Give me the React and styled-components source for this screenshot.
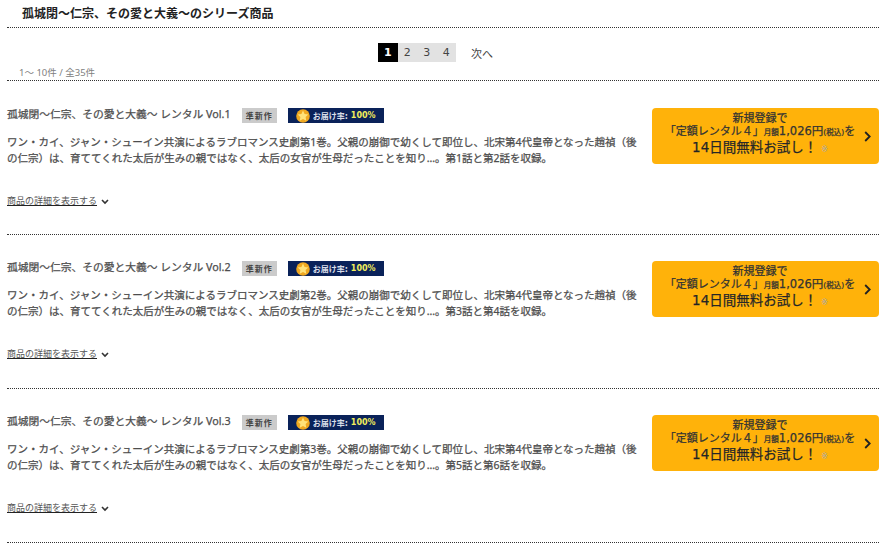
import styled, { createGlobalStyle } from "styled-components";

const Global = createGlobalStyle`
  html, body { margin: 0; padding: 0; background: #fff; }
  body { font-family: "Noto Sans", "Noto Sans CJK JP", sans-serif; color: #333; }
`;

const Page = styled.div`
  width: 886px;
  height: 557px;
  overflow: hidden;
  padding: 0 7px;
  box-sizing: border-box;
`;

const Heading = styled.h2`
  margin: 0;
  height: 27px;
  padding-left: 15px;
  border-bottom: 1px dotted #333;
  font-size: 12px;
  line-height: 27px;
  font-weight: bold;
  color: #222;
`;

const Pager = styled.div`
  display: flex;
  justify-content: center;
  align-items: center;
  height: 19px;
  margin-top: 15px;
  font-size: 11px;
  font-family: "DejaVu Sans", "Noto Sans CJK JP", sans-serif;
`;

const PageNum = styled.span`
  width: 19.5px;
  height: 19px;
  line-height: 19px;
  text-align: center;
  background: ${(p) => (p.$active ? "#000" : "#e2e2e2")};
  color: ${(p) => (p.$active ? "#fff" : "#444")};
  font-weight: ${(p) => (p.$active ? "bold" : "normal")};
`;

const Next = styled.span`
  margin-left: 15px;
  width: 37px;
  color: #444;
`;

const Count = styled.div`
  height: 18px;
  padding-left: 12px;
  border-bottom: 1px dotted #333;
  font-size: 9.5px;
  line-height: 22px;
  color: #808080;
`;

const Item = styled.section`
  display: flex;
  justify-content: space-between;
  height: 154px;
  padding-top: 27px;
  box-sizing: border-box;
  border-bottom: 1px dotted #333;
  & + & { padding-top: 26px; }
`;

const Body = styled.div`
  width: 640px;
`;

const TitleRow = styled.div`
  display: flex;
  align-items: center;
  height: 15px;
`;

const Title = styled.span`
  margin-top: -4px;
  font-size: 10.75px;
  -webkit-text-stroke: 0.25px #4d4d4d;
  color: #4d4d4d;
`;

const NewTag = styled.span`
  margin-left: 11px;
  width: 35px;
  height: 15px;
  background: #cbcbcb;
  color: #444;
  font-size: 8px;
  font-weight: bold;
  letter-spacing: 1px;
  line-height: 15px;
  text-align: center;
`;

const RateTag = styled.span`
  display: flex;
  align-items: center;
  margin-left: 11px;
  width: 96px;
  height: 15px;
  padding-left: 8px;
  box-sizing: border-box;
  background: #0a2259;
  color: #d8dde8;
  font-family: "DejaVu Sans", "Noto Sans CJK JP", sans-serif;
  font-size: 8px;
  font-weight: bold;
  white-space: nowrap;
  svg { margin-right: 3px; flex: none; }
  b { color: #f2ee5c; margin-left: 3px; }
`;

const Desc = styled.p`
  margin: 11px 0 0;
  font-size: 10.5px;
  line-height: 16px;
  -webkit-text-stroke: 0.25px #4d4d4d;
  color: #4d4d4d;
`;

const More = styled.div`
  display: flex;
  align-items: center;
  margin-top: 28px;
  font-size: 9px;
  color: #555;
  a { color: #555; text-decoration: underline; text-decoration-color: #222; }
  svg { margin-left: 4px; margin-top: 2px; }
`;

const Cta = styled.a`
  position: relative;
  width: 227px;
  height: 56px;
  border-radius: 4px;
  background: #ffb20a;
  color: #333;
  font-family: "DejaVu Sans", "Noto Sans CJK JP", sans-serif;
  font-size: 11px;
  -webkit-text-stroke: 0.25px #333;
  line-height: 13px;
  text-align: center;
  padding: 4px 11px 0 0;
  box-sizing: border-box;
  white-space: nowrap;
  svg { position: absolute; right: 7px; top: 23px; }
`;

const CtaPrice = styled.span`
  font-size: 11.5px;
`;

const CtaBig = styled.span`
  font-size: 13.5px;
  line-height: 16px;
  color: #222;
`;

const CtaSmall = styled.span`
  font-size: 7.5px;
`;

const Note = styled.span`
  font-size: 8px;
  color: #aaa;
  -webkit-text-stroke: 0;
  font-weight: normal;
  margin-left: 4px;
`;

const Star = () => (
  <svg width="14" height="14" viewBox="0 0 14 14">
    <circle cx="7" cy="7" r="6.8" fill="#f0a820" />
    <path d="M7 1.6l1.6 3.4 3.7.5-2.7 2.5.7 3.7L7 9.9l-3.3 1.8.7-3.7-2.7-2.5 3.7-.5z" fill="#ffe27a" />
  </svg>
);

const items = [
  { vol: 1, no: 1, eps: "第1話と第2話" },
  { vol: 2, no: 2, eps: "第3話と第4話" },
  { vol: 3, no: 3, eps: "第5話と第6話" },
];

export default function App() {
  return (
    <Page>
      <Global />
      <Heading>{"孤城閉\uFF5E仁宗、その愛と大義\uFF5Eのシリーズ商品"}</Heading>
      <Pager>
        <PageNum $active>1</PageNum>
        <PageNum>2</PageNum>
        <PageNum>3</PageNum>
        <PageNum>4</PageNum>
        <Next>次へ</Next>
      </Pager>
      <Count>{"1\uFF5E 10件 / 全35件"}</Count>
      {items.map((it) => (
        <Item key={it.vol}>
          <Body>
            <TitleRow>
              <Title>{`孤城閉\uFF5E仁宗、その愛と大義\uFF5E レンタル Vol.${it.vol}`}</Title>
              <NewTag>準新作</NewTag>
              <RateTag><Star />{"お届け率:"}<b>100%</b></RateTag>
            </TitleRow>
            <Desc>
              {`ワン・カイ、ジャン・シューイン共演によるラブロマンス史劇第${it.no}巻。父親の崩御で幼くして即位し、北宋第4代皇帝となった趙禎\uFF08後の仁宗\uFF09は、育ててくれた太后が生みの親ではなく、太后の女官が生母だったことを知り\u2026。${it.eps}を収録。`}
            </Desc>
            <More>
              <a>商品の詳細を表示する</a>
              <svg width="8" height="6" viewBox="0 0 8 6"><path d="M1 1l3 3 3-3" fill="none" stroke="#333" strokeWidth="1.6" /></svg>
            </More>
          </Body>
          <Cta>
            新規登録で<br />
            {"「定額レンタル\uFF14」"}<CtaSmall>月額</CtaSmall><CtaPrice>1,026円</CtaPrice><CtaSmall>(税込)</CtaSmall>を<br />
            <CtaBig>{"14日間無料お試し\uFF01"}</CtaBig><Note>※</Note>
            <svg width="8" height="11" viewBox="0 0 8 11"><path d="M1.2 1l4.5 4.5-4.5 4.5" fill="none" stroke="#222" strokeWidth="1.8" /></svg>
          </Cta>
        </Item>
      ))}
    </Page>
  );
}
